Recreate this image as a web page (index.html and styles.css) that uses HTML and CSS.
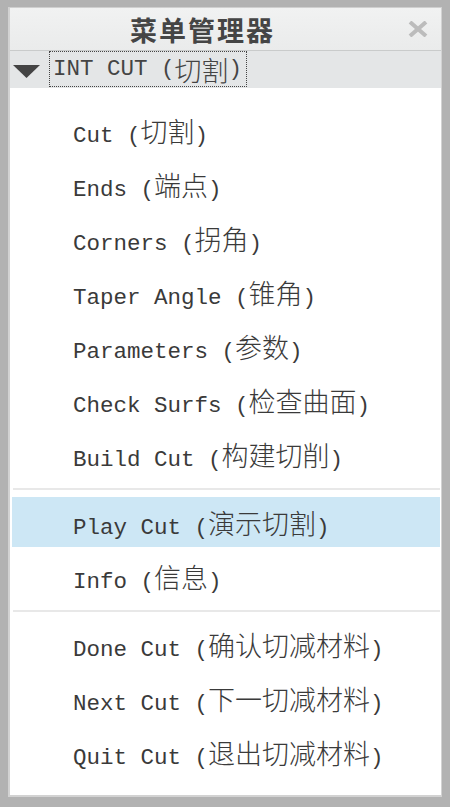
FILE: index.html
```html
<!DOCTYPE html>
<html>
<head>
    <title>菜单管理器</title>
    <link rel="stylesheet" href="styles.css">
</head>
<body>
    <div class="panel">
        <div class="title-bar">
            <span class="title">菜单管理器</span>
            <span class="close">
                <svg width="20" height="16" viewBox="0 0 20 16">
                    <path d="M2 1 L18 15 M18 1 L2 15" stroke="#bcbcbc" stroke-width="4" fill="none"/>
                </svg>
            </span>
        </div>
        <div class="menu-head">
            <svg class="arrow" width="27" height="13" viewBox="0 0 27 13">
                <polygon points="0,0 27,0 13.5,13" fill="#444"/>
            </svg>
            <span class="menu-name">INT CUT (<span class="zh">切割</span>)</span>
        </div>
        <div class="list">
            <div class="item"><span>Cut (<span class="zh">切割</span>)</span></div>
            <div class="item"><span>Ends (<span class="zh">端点</span>)</span></div>
            <div class="item"><span>Corners (<span class="zh">拐角</span>)</span></div>
            <div class="item"><span>Taper Angle (<span class="zh">锥角</span>)</span></div>
            <div class="item"><span>Parameters (<span class="zh">参数</span>)</span></div>
            <div class="item"><span>Check Surfs (<span class="zh">检查曲面</span>)</span></div>
            <div class="item"><span>Build Cut (<span class="zh">构建切削</span>)</span></div>
            <div class="separator"></div>
            <div class="item selected"><span>Play Cut (<span class="zh">演示切割</span>)</span></div>
            <div class="item"><span>Info (<span class="zh">信息</span>)</span></div>
            <div class="separator"></div>
            <div class="item"><span>Done Cut (<span class="zh">确认切减材料</span>)</span></div>
            <div class="item"><span>Next Cut (<span class="zh">下一切减材料</span>)</span></div>
            <div class="item"><span>Quit Cut (<span class="zh">退出切减材料</span>)</span></div>
        </div>
    </div>
</body>
</html>
```

FILE: styles.css
```css
html, body {
    margin: 0;
    height: 100%;
}

body {
    background-color: #b2b2b2;
    padding: 7px 8px 10px 8px;
    box-sizing: border-box;
    font-family: "Liberation Mono", "Noto Sans CJK SC", monospace;
    color: #3a3a3a;
}

.panel {
    height: 100%;
    box-sizing: border-box;
    border-top: 1px solid #cfcfcf;
    border-left: 2px solid #d2d2d2;
    border-right: 1px solid #d2d2d2;
    border-bottom: 2px solid #d2d2d2;
    background-color: #fff;
    display: flex;
    flex-direction: column;
}

.title-bar {
    height: 42px;
    display: flex;
    align-items: center;
    background: linear-gradient(#f1f2f2, #eaebeb);
    border-bottom: 1px solid #c9cbcb;
}

.title {
    flex: 1;
    text-align: center;
    font-family: "Noto Sans CJK SC", sans-serif;
    font-size: 27px;
    font-weight: bold;
    letter-spacing: 2px;
    color: #454545;
}

.close {
    width: 46px;
    display: flex;
    justify-content: center;
    align-items: center;
}

.menu-head {
    height: 37px;
    display: flex;
    align-items: flex-start;
    background-color: #e4e6e7;
}

.arrow {
    margin: 14px 9px 0 3px;
}

.menu-name {
    height: 36px;
    box-sizing: border-box;
    border: 1px dotted #444;
    padding: 0 4px 0 3px;
    display: flex;
    align-items: center;
    font-size: 22.5px;
    color: #444;
    white-space: pre;
}

.zh {
    font-family: "Noto Sans CJK SC", sans-serif;
    font-size: 27px;
    font-weight: 300;
}

.list {
    flex: 1;
    padding: 15px 1px 0 2px;
}

.item {
    height: 54px;
    display: flex;
    align-items: center;
    padding-left: 61px;
    font-size: 22.5px;
    white-space: pre;
}

.item.selected {
    box-sizing: border-box;
    border-top: 2px solid transparent;
    border-bottom: 2px solid transparent;
    background-clip: padding-box;
    background-color: #cde7f5;
}

.separator {
    height: 2px;
    margin: 7px 0 5px 1px;
    background-color: #e8e8e8;
}
```
